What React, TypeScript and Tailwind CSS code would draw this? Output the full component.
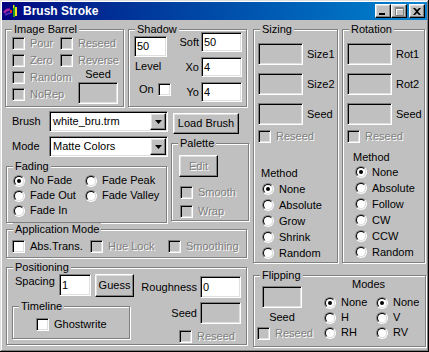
import React from 'react'

const sunken =
  'border border-t-[#808080] border-l-[#808080] border-r-white border-b-white shadow-[inset_1px_1px_0_#000,inset_-1px_-1px_0_#dfdfdf]'
const raised =
  'border border-t-white border-l-white border-r-black border-b-black shadow-[inset_-1px_-1px_0_#808080,inset_1px_1px_0_#dfdfdf]'
const dim = 'text-[#808080] [text-shadow:1px_1px_0_#fff]'

function Check({ label, disabled, className = '' }: { label: string; disabled?: boolean; className?: string }) {
  return (
    <div className={`flex items-center h-[13px] gap-[5px] whitespace-nowrap ${className}`}>
      <div className={`w-[13px] h-[13px] shrink-0 ${sunken} ${disabled ? 'bg-[#c0c0c0]' : 'bg-white'}`} />
      <span className={disabled ? dim : ''}>{label}</span>
    </div>
  )
}

function Radio({ label, on, h = 'h-[16px]' }: { label: string; on?: boolean; h?: string }) {
  return (
    <div className={`flex items-center gap-[5px] whitespace-nowrap ${h}`}>
      <div className="w-[12px] h-[12px] shrink-0 rounded-full border border-t-[#808080] border-l-[#808080] border-r-white border-b-white">
        <div className="w-full h-full rounded-full bg-white border border-t-black border-l-black border-r-[#dfdfdf] border-b-[#dfdfdf] flex items-center justify-center">
          {on && <div className="w-[4px] h-[4px] rounded-full bg-black" />}
        </div>
      </div>
      <span>{label}</span>
    </div>
  )
}

function Field({ value, disabled, className = '' }: { value?: string; disabled?: boolean; className?: string }) {
  return (
    <div className={`${sunken} ${disabled ? 'bg-[#c0c0c0]' : 'bg-white'} flex items-center pl-[2px] shrink-0 ${className}`}>
      {value}
    </div>
  )
}

function Btn({ children, disabled, className = '' }: { children: React.ReactNode; disabled?: boolean; className?: string }) {
  return (
    <div className={`${raised} bg-[#c0c0c0] flex items-center justify-center shrink-0 ${className}`}>
      <span className={disabled ? dim : ''}>{children}</span>
    </div>
  )
}

function Combo({ value, className = '' }: { value: string; className?: string }) {
  return (
    <div className={`${sunken} bg-white h-[21px] flex p-[1px] ${className}`}>
      <span className="flex-1 flex items-center pl-[2px]">{value}</span>
      <div className={`${raised} bg-[#c0c0c0] w-[16px] flex items-center justify-center`}>
        <svg width="7" height="4" viewBox="0 0 7 4">
          <path d="M0 0h7L3.5 4z" fill="#000" />
        </svg>
      </div>
    </div>
  )
}

function Group({ label, className = '', children }: { label: string; className?: string; children?: React.ReactNode }) {
  return (
    <div className={`relative shrink-0 border border-[#808080] shadow-[inset_1px_1px_0_#fff,1px_1px_0_#fff] ${className}`}>
      <span className="absolute top-[-7px] left-[6px] px-[2px] bg-[#c0c0c0] leading-[13px] whitespace-nowrap">{label}</span>
      {children}
    </div>
  )
}

function BoxRow({ label, className = '' }: { label: string; className?: string }) {
  return (
    <div className={`flex items-center gap-[4px] ${className}`}>
      <Field disabled className="w-[45px] h-[22px]" />
      <span>{label}</span>
    </div>
  )
}

function TitleBtn({ children, className = '' }: { children: React.ReactNode; className?: string }) {
  return (
    <div className={`w-[16px] h-[14px] bg-[#c0c0c0] ${raised} flex items-center justify-center ${className}`}>{children}</div>
  )
}

function BrushIcon() {
  return (
    <svg width="16" height="16" viewBox="0 0 16 16">
      <path d="M1 10c2-3 4-4 6-3" stroke="#a020a0" strokeWidth="2.5" fill="none" />
      <path d="M2 12c2-1 4-2 6-2" stroke="#6030c0" strokeWidth="1.5" fill="none" />
      <rect x="7" y="7" width="2" height="3" fill="#e02020" />
      <rect x="10" y="2" width="2" height="12" fill="#20a020" />
      <rect x="12" y="4" width="2" height="9" fill="#f0e020" />
      <rect x="10" y="2" width="1" height="3" fill="#f0e020" />
    </svg>
  )
}

function TitleBar() {
  return (
    <div className="h-[18px] flex items-center bg-linear-to-r from-[#000080] to-[#1084d0] pl-[1px] pr-[2px]">
      <BrushIcon />
      <span className="ml-[4px] text-white font-bold text-[12px] leading-[14px]">Brush Stroke</span>
      <div className="ml-auto flex">
        <TitleBtn>
          <svg width="8" height="7" viewBox="0 0 8 7">
            <rect x="0" y="5" width="6" height="2" fill="#000" />
          </svg>
        </TitleBtn>
        <TitleBtn>
          <svg width="9" height="9" viewBox="0 0 9 9">
            <path d="M1.5 1.5h8v8h-8z M1.5 2.5h8" stroke="#fff" fill="none" />
            <path d="M0.5 0.5h8v8h-8z M0.5 1.5h8" stroke="#808080" fill="none" />
          </svg>
        </TitleBtn>
        <TitleBtn className="ml-[2px]">
          <svg width="8" height="7" viewBox="0 0 8 7">
            <path d="M0 0h2l2 2 2-2h2L5 3.5 8 7H6L4 5 2 7H0l3-3.5z" fill="#000" />
          </svg>
        </TitleBtn>
      </div>
    </div>
  )
}

function ImageBarrel() {
  return (
    <Group label="Image Barrel" className="w-[119px] h-[78px]">
      <div className="flex pl-[6px] pt-[7px]">
        <div className="w-[48px] flex flex-col gap-[4px]">
          <Check label="Pour" disabled />
          <Check label="Zero" disabled />
          <Check label="Random" disabled />
          <Check label="NoRep" disabled />
        </div>
        <div className="flex flex-col gap-[4px]">
          <Check label="Reseed" disabled />
          <Check label="Reverse" disabled />
          <div className="ml-[18px] w-[40px] flex flex-col items-center mt-[-3px]">
            <span>Seed</span>
            <Field disabled className="w-[40px] h-[22px] mt-[1px]" />
          </div>
        </div>
      </div>
    </Group>
  )
}

function Shadow() {
  const rows = [
    ['Soft', '50'],
    ['Xo', '4'],
    ['Yo', '4'],
  ]
  return (
    <Group label="Shadow" className="w-[119px] h-[78px]">
      <div className="flex">
        <div className="pl-[5px] pt-[6px] flex flex-col">
          <Field value="50" className="w-[33px] h-[21px]" />
          <span className="mt-[3px] ml-[1px]">Level</span>
          <div className="flex items-center mt-[10px] ml-[5px] gap-[4px]">
            <span>On</span>
            <div className={`w-[13px] h-[13px] bg-white ${sunken}`} />
          </div>
        </div>
        <div className="ml-auto pr-[4px] pt-[2px] flex flex-col gap-[5px]">
          {rows.map(([l, v]) => (
            <div key={l} className="flex items-center justify-end gap-[2px]">
              <span>{l}</span>
              <Field value={v} className="w-[41px] h-[20px]" />
            </div>
          ))}
        </div>
      </div>
    </Group>
  )
}

function Fading() {
  return (
    <Group label="Fading" className="w-[161px] h-[57px] mt-[9px] ml-[1px]">
      <div className="grid grid-cols-[72px_auto] pl-[6px] pt-[6px]">
        <Radio label="No Fade" on h="h-[15px]" />
        <Radio label="Fade Peak" h="h-[15px]" />
        <Radio label="Fade Out" h="h-[15px]" />
        <Radio label="Fade Valley" h="h-[15px]" />
        <Radio label="Fade In" h="h-[15px]" />
      </div>
    </Group>
  )
}

function Palette() {
  return (
    <Group label="Palette" className="w-[78px] h-[78px] mt-[9px]">
      <div className="flex flex-col pl-[7px] pt-[11px]">
        <Btn disabled className="w-[39px] h-[22px]">Edit</Btn>
        <Check label="Smooth" disabled className="mt-[9px] ml-[1px]" />
        <Check label="Wrap" disabled className="mt-[6px] ml-[1px]" />
      </div>
    </Group>
  )
}

function Positioning() {
  return (
    <Group label="Positioning" className="w-[241px] h-[78px] mt-[9px] ml-[1px]">
      <div className="flex">
        <div className="flex flex-col pl-[5px] pt-[6px]">
          <div className="flex items-start">
            <span className="ml-[3px] w-[44px] mt-[1px]">Spacing</span>
            <Field value="1" className="w-[32px] h-[22px]" />
            <Btn className="ml-[4px] w-[39px] h-[23px]">Guess</Btn>
          </div>
          <Group label="Timeline" className="mt-[9px] w-[118px] h-[33px]">
            <Check label="Ghostwrite" className="ml-[23px] mt-[11px]" />
          </Group>
        </div>
        <div className="ml-auto mr-[5px] pt-[8px] w-[98px] flex flex-col">
          <div className="flex items-center justify-end gap-[3px]">
            <span>Roughness</span>
            <Field value="0" className="w-[41px] h-[22px]" />
          </div>
          <div className="flex items-center justify-end gap-[3px] mt-[4px]">
            <span>Seed</span>
            <Field disabled className="w-[41px] h-[22px]" />
          </div>
          <Check label="Reseed" disabled className="mt-[6px] ml-[36px]" />
        </div>
      </div>
    </Group>
  )
}

function LeftColumn() {
  return (
    <div className="w-[244px] flex flex-col shrink-0">
      <div className="flex gap-[4px] h-[78px]">
        <ImageBarrel />
        <Shadow />
      </div>
      <div className="flex">
        <div className="w-[166px] flex flex-col">
          <div className="flex items-center mt-[4px] h-[21px]">
            <span className="w-[37px] ml-[7px]">Brush</span>
            <Combo value="white_bru.trm" className="w-[119px]" />
          </div>
          <div className="flex items-center mt-[4px] h-[21px]">
            <span className="w-[37px] ml-[7px]">Mode</span>
            <Combo value="Matte Colors" className="w-[119px]" />
          </div>
          <Fading />
        </div>
        <div className="flex flex-col">
          <Btn className="mt-[6px] ml-[2px] w-[66px] h-[21px]">Load Brush</Btn>
          <Palette />
        </div>
      </div>
      <Group label="Application Mode" className="w-[241px] h-[29px] mt-[6px] ml-[1px]">
        <div className="grid grid-cols-[78px_78px_auto] pl-[5px] pt-[10px]">
          <Check label="Abs.Trans." />
          <Check label="Hue Lock" disabled />
          <Check label="Smoothing" disabled />
        </div>
      </Group>
      <Positioning />
    </div>
  )
}

function RightColumn() {
  return (
    <div className="w-[173px] flex flex-col shrink-0">
      <div className="flex gap-[4px]">
        <Group label="Sizing" className="w-[85px] h-[234px]">
          <div className="pl-[4px] pt-[13px] flex flex-col">
            <BoxRow label="Size1" />
            <BoxRow label="Size2" className="mt-[8px]" />
            <BoxRow label="Seed" className="mt-[8px]" />
            <Check label="Reseed" disabled className="mt-[5px]" />
            <span className="mt-[24px] ml-[3px]">Method</span>
            <div className="ml-[4px] mt-[1px] flex flex-col">
              <Radio label="None" on />
              <Radio label="Absolute" />
              <Radio label="Grow" />
              <Radio label="Shrink" />
              <Radio label="Random" />
            </div>
          </div>
        </Group>
        <Group label="Rotation" className="w-[83px] h-[234px]">
          <div className="pl-[4px] pt-[13px] flex flex-col">
            <BoxRow label="Rot1" />
            <BoxRow label="Rot2" className="mt-[8px]" />
            <BoxRow label="Seed" className="mt-[8px]" />
            <Check label="Reseed" disabled className="mt-[5px]" />
            <span className="mt-[8px] ml-[6px]">Method</span>
            <div className="ml-[8px] flex flex-col">
              <Radio label="None" on />
              <Radio label="Absolute" />
              <Radio label="Follow" />
              <Radio label="CW" />
              <Radio label="CCW" />
              <Radio label="Random" />
            </div>
          </div>
        </Group>
      </div>
      <Group label="Flipping" className="mt-[12px] w-[173px] h-[72px]">
        <div className="flex">
          <div className="w-[70px] pl-[3px] pt-[10px] flex flex-col">
            <div className="ml-[5px] w-[40px] flex flex-col items-center">
              <Field disabled className="w-[40px] h-[22px]" />
              <span className="mt-[3px]">Seed</span>
            </div>
            <Check label="Reseed" disabled className="mt-[3px]" />
          </div>
          <div className="flex flex-col pt-[2px]">
            <span className="ml-[28px]">Modes</span>
            <div className="grid grid-cols-[52px_auto] mt-[4px]">
              <Radio label="None" on h="h-[15px]" />
              <Radio label="None" on h="h-[15px]" />
              <Radio label="H" h="h-[15px]" />
              <Radio label="V" h="h-[15px]" />
              <Radio label="RH" h="h-[15px]" />
              <Radio label="RV" h="h-[15px]" />
            </div>
          </div>
        </div>
      </Group>
    </div>
  )
}

export default function App() {
  return (
    <div className="w-[429px] h-[352px] bg-[#c0c0c0] p-[2px] text-[11px] leading-[13px] text-black font-['Liberation_Sans',Arial,sans-serif] shadow-[inset_-1px_-1px_0_#000,inset_1px_1px_0_#dfdfdf,inset_-2px_-2px_0_#808080,inset_2px_2px_0_#fff] overflow-hidden">
      <TitleBar />
      <div className="flex pl-[3px] pt-[9px] gap-[4px]">
        <LeftColumn />
        <RightColumn />
      </div>
    </div>
  )
}
